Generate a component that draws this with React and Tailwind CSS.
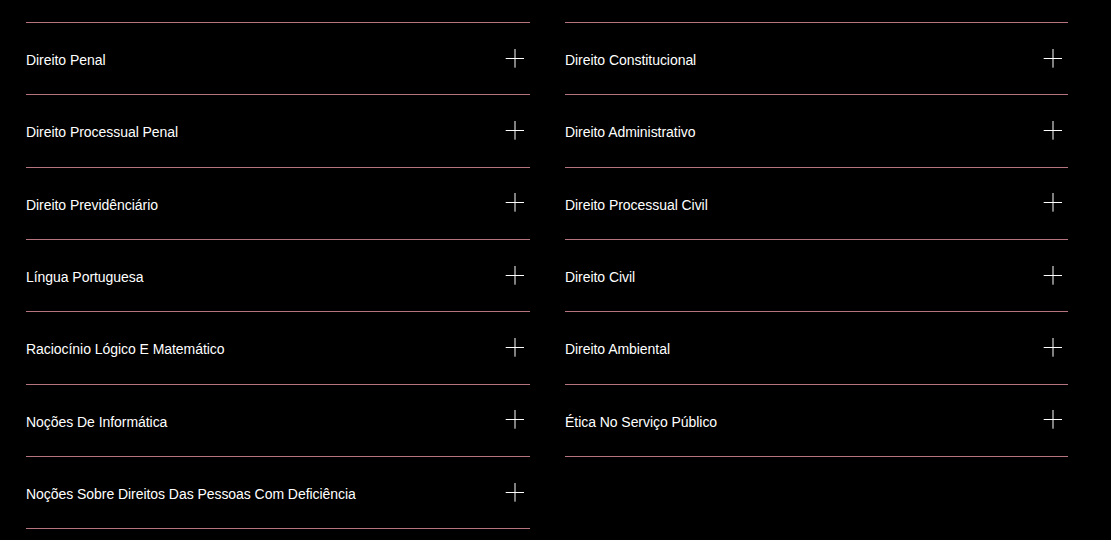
const left = [
  "Direito Penal",
  "Direito Processual Penal",
  "Direito Previdênciário",
  "Língua Portuguesa",
  "Raciocínio Lógico E Matemático",
  "Noções De Informática",
  "Noções Sobre Direitos Das Pessoas Com Deficiência",
];

const right = [
  "Direito Constitucional",
  "Direito Administrativo",
  "Direito Processual Civil",
  "Direito Civil",
  "Direito Ambiental",
  "Ética No Serviço Público",
];

function PlusIcon() {
  return (
    <svg width="20" height="20" viewBox="0 0 20 20" fill="none" className="shrink-0">
      <path d="M10 0V18.7M0.7 9.5H19" stroke="#ffffff" strokeWidth="1" />
    </svg>
  );
}

function Item({ title }) {
  return (
    <button className="flex h-[72.333px] w-full items-center justify-between border-t border-[#b5757f] pr-[5px] text-left">
      <span className="mt-[3px] text-[14px] leading-4 tracking-[-0.05px] text-white">{title}</span>
      <PlusIcon />
    </button>
  );
}

function Column({ items }) {
  return (
    <div className="flex flex-col border-b border-[#b5757f]">
      {items.map((t) => (
        <Item key={t} title={t} />
      ))}
    </div>
  );
}

export default function App() {
  return (
    <div
      className="h-[540px] w-full overflow-hidden bg-black pl-[26px] pt-[22px]"
      style={{ fontFamily: '"Liberation Sans", Arial, sans-serif' }}
    >
      <div className="grid grid-cols-[504px_503px] items-start gap-x-[35px]">
        <Column items={left} />
        <Column items={right} />
      </div>
    </div>
  );
}
